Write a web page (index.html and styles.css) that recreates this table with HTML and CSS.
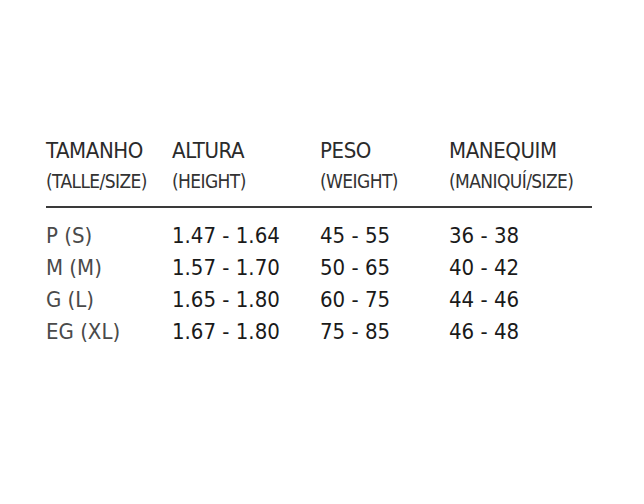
FILE: index.html
```html
<!DOCTYPE html>
<html>
<head>
<meta charset="utf-8">
<link rel="stylesheet" href="styles.css">
</head>
<body>
<div class="chart">
  <div class="head">
    <div class="col c1"><div class="t">TAMANHO</div><div class="s">(TALLE/SIZE)</div></div>
    <div class="col c2"><div class="t">ALTURA</div><div class="s">(HEIGHT)</div></div>
    <div class="col c3"><div class="t">PESO</div><div class="s">(WEIGHT)</div></div>
    <div class="col c4"><div class="t">MANEQUIM</div><div class="s">(MANIQUÍ/SIZE)</div></div>
  </div>
  <div class="rule"></div>
  <div class="rows">
    <div class="row"><span class="size">P (S)</span><span>1.47 - 1.64</span><span>45 - 55</span><span>36 - 38</span></div>
    <div class="row"><span class="size">M (M)</span><span>1.57 - 1.70</span><span>50 - 65</span><span>40 - 42</span></div>
    <div class="row"><span class="size">G (L)</span><span>1.65 - 1.80</span><span>60 - 75</span><span>44 - 46</span></div>
    <div class="row"><span class="size">EG (XL)</span><span>1.67 - 1.80</span><span>75 - 85</span><span>46 - 48</span></div>
  </div>
</div>
</body>
</html>
```
FILE: styles.css
```css
html, body {
  margin: 0;
  padding: 0;
  background: #ffffff;
}
body {
  width: 644px;
  height: 504px;
  font-family: "DejaVu Sans Condensed", "DejaVu Sans", sans-serif;
  font-stretch: condensed;
  color: #222;
}
.chart {
  padding: 136px 0 0 46px;
  width: 546px;
}
.head, .row {
  display: grid;
  grid-template-columns: 126px 148px 129px 1fr;
}
.t {
  font-size: 22px;
  line-height: 30px;
  letter-spacing: -0.4px;
  color: #2b2b2b;
}
.s {
  font-size: 19px;
  line-height: 30px;
  letter-spacing: -0.6px;
  color: #333;
}
.rule {
  height: 2px;
  background: #3a3a3a;
  margin-top: 10px;
}
.rows {
  padding-top: 12px;
}
.row {
  font-size: 22px;
  line-height: 32px;
  color: #1a1a1a;
}
.row .size {
  color: #4a4a4a;
}
```
